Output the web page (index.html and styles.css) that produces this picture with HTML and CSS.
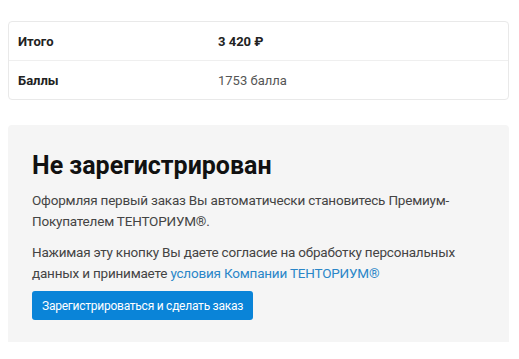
FILE: index.html
```html
<!DOCTYPE html>
<html lang="ru">
<head>
<meta charset="utf-8">
<link rel="stylesheet" href="styles.css">
</head>
<body>
<div class="page">
  <div class="summary">
    <div class="row">
      <div class="label">Итого</div>
      <div class="value total">3 420 ₽</div>
    </div>
    <div class="row">
      <div class="label">Баллы</div>
      <div class="value">1753 балла</div>
    </div>
  </div>
  <section class="notice">
    <h2 class="title">Не зарегистрирован</h2>
    <p class="text">Оформляя первый заказ Вы автоматически становитесь Премиум-Покупателем ТЕНТОРИУМ®.</p>
    <p class="text last">Нажимая эту кнопку Вы даете согласие на обработку персональных данных и принимаете <a class="link" href="#">условия Компании ТЕНТОРИУМ®</a></p>
    <button class="btn" type="button">Зарегистрироваться и сделать заказ</button>
  </section>
</div>
</body>
</html>
```
FILE: styles.css
```css
html, body {
  margin: 0;
  padding: 0;
  background: #fff;
}
body {
  font-family: Roboto, "Noto Sans", sans-serif;
  color: #222;
}
.page {
  padding: 21px 10px 0 8px;
}
.summary {
  border: 1px solid #e9e9e9;
  border-radius: 4px;
}
.row {
  display: grid;
  grid-template-columns: 200px 1fr;
  align-items: center;
  height: 38px;
  padding: 0 9px;
  font-size: 13px;
}
.row + .row {
  border-top: 1px solid #efefef;
}
.label {
  font-weight: 700;
  color: #222;
}
.value {
  color: #555;
}
.value.total {
  font-weight: 700;
  color: #222;
}
.notice {
  margin-top: 25px;
  background: #f5f5f5;
  border-radius: 4px 4px 0 0;
  padding: 26px 24px 22px;
}
.title {
  margin: 0 0 9px;
  font-size: 25px;
  line-height: 30px;
  font-weight: 700;
  color: #111;
}
.text {
  margin: 0 0 10px;
  font-size: 13.5px;
  letter-spacing: -0.2px;
  line-height: 21px;
  color: #444;
}
.text.last {
  margin-bottom: 0;
}
.link {
  color: #2a86c8;
  text-decoration: none;
}
.btn {
  margin-top: 7px;
  display: block;
  height: 29px;
  padding: 0 10px;
  border: 0;
  border-radius: 3px;
  background: #0a84d8;
  color: #fff;
  font-family: inherit;
  font-size: 12px;
  letter-spacing: -0.25px;
}
```
